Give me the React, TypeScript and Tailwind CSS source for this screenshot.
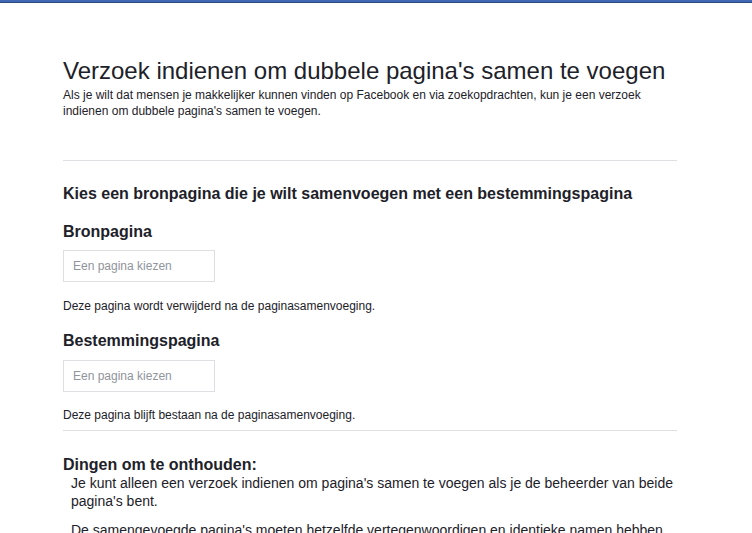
const App = () => {
  return (
    <div className="min-h-screen bg-white font-['Liberation_Sans',Arial,sans-serif] text-[#1d2129]">
      <div className="h-[3px] bg-[#4267b2] border-b border-[#29487d]" />
      <div className="ml-[63px] w-[614px] pt-[53px]">
        <h1 className="text-[24px] leading-[30px] font-normal">
          Verzoek indienen om dubbele pagina's samen te voegen
        </h1>
        <p className="text-[12px] leading-[16px] mt-[1px]">
          Als je wilt dat mensen je makkelijker kunnen vinden op Facebook en via
          zoekopdrachten, kun je een verzoek indienen om dubbele pagina's samen
          te voegen.
        </p>
        <div className="mt-[41px] border-t border-[#dddfe2]" />
        <h2 className="mt-[23px] text-[16px] leading-[20px] font-bold">
          Kies een bronpagina die je wilt samenvoegen met een bestemmingspagina
        </h2>
        <h3 className="mt-[18px] text-[16px] leading-[20px] font-bold">
          Bronpagina
        </h3>
        <div className="mt-[8px] w-[152px] h-[32px] border border-[#dddfe2] flex items-center px-[9px] text-[12px] text-[#90949c]">
          Een pagina kiezen
        </div>
        <p className="mt-[16px] text-[12px] leading-[16px]">
          Deze pagina wordt verwijderd na de paginasamenvoeging.
        </p>
        <h3 className="mt-[17px] text-[16px] leading-[20px] font-bold">
          Bestemmingspagina
        </h3>
        <div className="mt-[9px] w-[152px] h-[32px] border border-[#dddfe2] flex items-center px-[9px] text-[12px] text-[#90949c]">
          Een pagina kiezen
        </div>
        <p className="mt-[15px] text-[12px] leading-[16px]">
          Deze pagina blijft bestaan na de paginasamenvoeging.
        </p>
        <div className="mt-[7px] border-t border-[#dddfe2]" />
        <h2 className="mt-[24px] text-[16px] leading-[20px] font-bold">
          Dingen om te onthouden:
        </h2>
        <div className="-mt-[1px] pl-[8px] text-[14px] leading-[18px]">
          <p>
            Je kunt alleen een verzoek indienen om pagina's samen te voegen als
            je de beheerder van beide pagina's bent.
          </p>
          <p className="mt-[11px]">
            De samengevoegde pagina's moeten hetzelfde vertegenwoordigen en
            identieke namen hebben.
          </p>
        </div>
      </div>
    </div>
  );
};

export default App;
